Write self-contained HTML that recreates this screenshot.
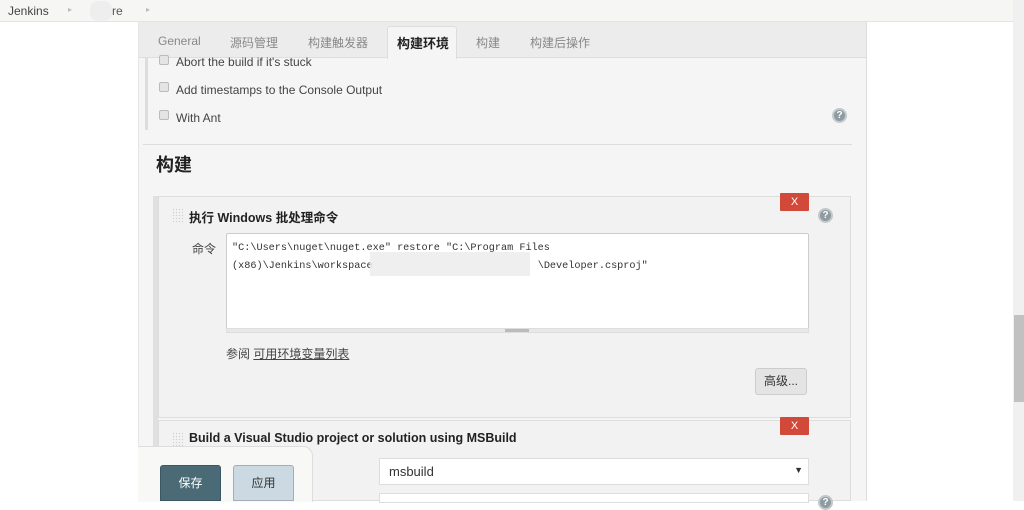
<!DOCTYPE html>
<html><head><meta charset="utf-8"><style>
*{margin:0;padding:0;box-sizing:border-box}
body{width:1024px;height:501px;overflow:hidden;background:#fff;font-family:"Liberation Sans","Noto Sans CJK SC",sans-serif;font-size:12px;color:#333;position:relative}
.a{position:absolute}
.top{left:0;top:0;width:1024px;height:22px;background:#f6f6f4;border-bottom:1px solid #e4e4e4}
.panel{left:138px;top:22px;width:729px;height:479px;background:#f5f5f5;border-left:1px solid #e6e6e6;border-right:1px solid #ddd}
.tabs{left:139px;top:22px;width:727px;height:36px;background:#ececec;border-bottom:1px solid #ddd}
.tab{top:34px;font-size:12px;color:#888}
.cb{width:10px;height:10px;border:1px solid #bbb;border-radius:2px;background:#e4e4e4}
.help{width:15px;height:15px;border-radius:50%;background:#8e9ba0;border:2px solid #c2c8cb;color:#fff;font-size:10px;font-weight:bold;text-align:center;line-height:11px}
.x{width:29px;height:18px;background:#d24939;color:#fff;text-align:center;font-size:11px;line-height:18px;border-radius:1px}
.grip{width:11px;height:14px;background-image:radial-gradient(#ccc 0.7px,transparent 0.8px);background-size:3px 3px}
.mono{font-family:"Liberation Mono","Noto Sans CJK SC",monospace;font-size:10.2px;color:#333;line-height:18px;white-space:pre}
</style></head><body>
<div class="a top"></div>
<div class="a" style="left:8px;top:4px;font-size:12px;color:#444">Jenkins</div>
<div class="a" style="left:68px;top:5px;font-size:8px;color:#bbb">▸</div>
<div class="a" style="left:90px;top:1px;width:22px;height:20px;background:#eee;border-radius:8px"></div>
<div class="a" style="left:112px;top:4px;color:#555">re</div>
<div class="a" style="left:146px;top:5px;font-size:8px;color:#bbb">▸</div>
<div class="a panel"></div>
<div class="a tabs"></div>
<div class="a tab" style="left:158px">General</div>
<div class="a tab" style="left:230px">源码管理</div>
<div class="a tab" style="left:308px">构建触发器</div>
<div class="a" style="left:387px;top:26px;width:70px;height:33px;background:#f5f5f5;border:1px solid #ddd;border-bottom:none;border-radius:3px 3px 0 0"></div>
<div class="a" style="left:397px;top:33px;font-size:13px;font-weight:bold;color:#222">构建环境</div>
<div class="a tab" style="left:476px">构建</div>
<div class="a tab" style="left:530px">构建后操作</div>
<div class="a" style="left:145px;top:58px;width:3px;height:72px;background:#ddd"></div>
<div class="a cb" style="left:159px;top:55px"></div><div class="a" style="left:176px;top:55px;color:#444">Abort the build if it's stuck</div>
<div class="a cb" style="left:159px;top:82px"></div><div class="a" style="left:176px;top:83px;color:#444">Add timestamps to the Console Output</div>
<div class="a cb" style="left:159px;top:110px"></div><div class="a" style="left:176px;top:111px;color:#444">With Ant</div>
<div class="a help" style="left:832px;top:108px">?</div>
<div class="a" style="left:143px;top:144px;width:709px;height:1px;background:#ddd"></div>
<div class="a" style="left:156px;top:151px;font-size:18px;font-weight:bold;color:#222">构建</div>
<div class="a" style="left:153px;top:196px;width:5px;height:305px;background:#e0e0e0"></div>
<div class="a" style="left:158px;top:196px;width:693px;height:222px;border:1px solid #ddd;background:#f2f2f2"></div>
<div class="a" style="left:158px;top:420px;width:693px;height:81px;border:1px solid #ddd;background:#f2f2f2"></div>
<div class="a grip" style="left:172px;top:208px"></div>
<div class="a" style="left:189px;top:207px;font-size:12.5px;font-weight:bold;color:#222">执行 Windows 批处理命令</div>
<div class="a x" style="left:780px;top:193px">X</div>
<div class="a help" style="left:818px;top:208px">?</div>
<div class="a" style="left:192px;top:240px;color:#444">命令</div>
<div class="a" style="left:226px;top:233px;width:583px;height:97px;background:#fff;border:1px solid #ccc;border-radius:2px"></div>
<div class="a" style="left:226px;top:328px;width:583px;height:5px;background:#e8e8e8;border:1px solid #ddd"></div>
<div class="a" style="left:505px;top:329px;width:24px;height:3px;background:#bbb"></div>
<div class="a mono" style="left:232px;top:240px">"C:\Users\nuget\nuget.exe" restore "C:\Program Files
(x86)\Jenkins\workspace<span style="color:transparent">xxxxxxxxxxxxxxxxxxxxxxxxxxx</span>\Developer.csproj"</div>
<div class="a" style="left:370px;top:252px;width:160px;height:24px;background:#ececec;opacity:.85"></div>
<div class="a" style="left:226px;top:345px;color:#444">参阅 <span style="text-decoration:underline">可用环境变量列表</span></div>
<div class="a" style="left:755px;top:368px;width:52px;height:27px;background:#e4e4e4;border:1px solid #ccc;border-radius:3px;text-align:center;line-height:25px;color:#333">高级...</div>
<div class="a grip" style="left:172px;top:432px"></div>
<div class="a" style="left:189px;top:431px;font-size:12.5px;font-weight:bold;color:#222">Build a Visual Studio project or solution using MSBuild</div>
<div class="a x" style="left:780px;top:417px">X</div>
<div class="a" style="left:379px;top:458px;width:430px;height:27px;background:#fff;border:1px solid #ddd;padding:5px 9px;font-size:13px;color:#333">msbuild<span style="position:absolute;right:5px;top:6px;font-size:9px">▼</span></div>
<div class="a" style="left:379px;top:493px;width:430px;height:10px;background:#fff;border:1px solid #ddd"></div>
<div class="a help" style="left:818px;top:495px">?</div>
<div class="a" style="left:138px;top:446px;width:175px;height:56px;background:#f8f8f6;border:1px solid #ddd;border-left:none;border-bottom:none;border-radius:0 10px 0 0"></div>
<div class="a" style="left:160px;top:465px;width:61px;height:36px;background:#4a6b76;border:1px solid #3c5862;border-radius:3px 3px 0 0;color:#fff;text-align:center;line-height:34px">保存</div>
<div class="a" style="left:233px;top:465px;width:61px;height:36px;background:#cbd9e3;border:1px solid #aab;border-radius:3px 3px 0 0;color:#333;text-align:center;line-height:34px">应用</div>
<div class="a" style="left:1013px;top:0;width:11px;height:501px;background:#f0f0f0"></div>
<div class="a" style="left:1014px;top:315px;width:10px;height:87px;background:#c1c1c1"></div>
</body></html>
